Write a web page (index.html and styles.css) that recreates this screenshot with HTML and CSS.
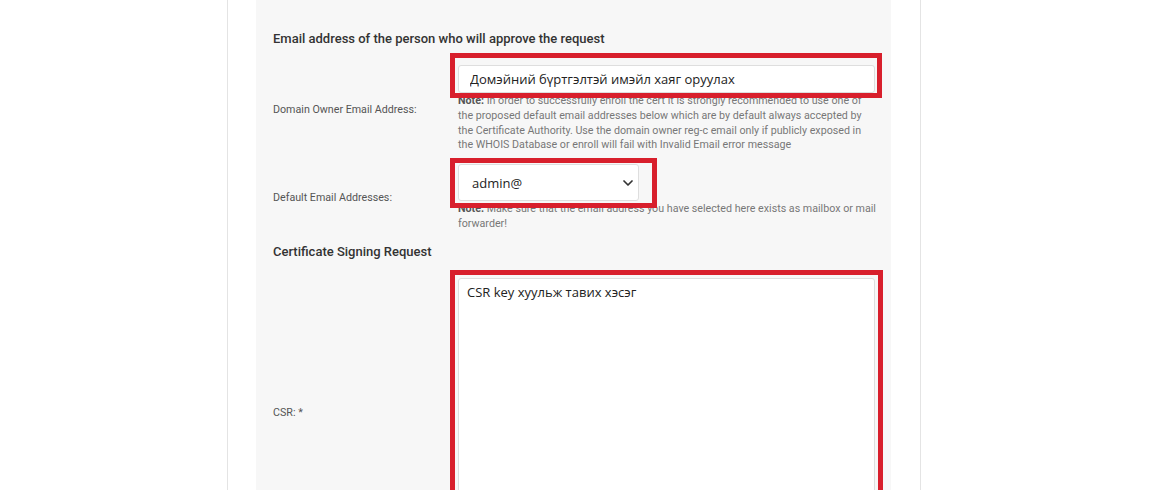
FILE: index.html
```html
<!DOCTYPE html>
<html lang="mn">
<head>
    <meta charset="UTF-8">
    <meta name="viewport" content="width=device-width, initial-scale=1.0">
    <title>SSL захиалга</title>
    <link rel="stylesheet" href="styles.css">
</head>
<body>
    <div class="page">
        <div class="card">
            <div class="panel">
                <h3 class="section-title">Email address of the person who will approve the request</h3>

                <div class="row">
                    <label class="row-label" for="ownerEmail">Domain Owner Email Address:</label>
                    <div class="row-field">
                        <div class="marked mark-input">
                            <input class="text-input" id="ownerEmail" type="text" value="Домэйний бүртгэлтэй имэйл хаяг оруулах">
                        </div>
                        <p class="note"><b>Note:</b> In order to successfully enroll the cert it is strongly recommended to use one of<br>
                            the proposed default email addresses below which are by default always accepted by<br>
                            the Certificate Authority. Use the domain owner reg-c email only if publicly exposed in<br>
                            the WHOIS Database or enroll will fail with Invalid Email error message</p>
                    </div>
                </div>

                <div class="row">
                    <label class="row-label" for="defaultEmail">Default Email Addresses:</label>
                    <div class="row-field">
                        <div class="marked mark-select">
                            <select class="select-input" id="defaultEmail">
                                <option>admin@</option>
                                <option>administrator@</option>
                                <option>hostmaster@</option>
                                <option>postmaster@</option>
                                <option>webmaster@</option>
                            </select>
                            <svg class="chevron" width="10" height="6" viewBox="0 0 10 6">
                                <path d="M1 1l4 4 4-4" fill="none" stroke="#333" stroke-width="1.7" stroke-linecap="round" stroke-linejoin="round"/>
                            </svg>
                        </div>
                        <p class="note"><b>Note:</b> Make sure that the email address you have selected here exists as mailbox or mail forwarder!</p>
                    </div>
                </div>

                <h3 class="section-title">Certificate Signing Request</h3>

                <div class="row">
                    <label class="row-label" for="csr">CSR: *</label>
                    <div class="row-field">
                        <div class="marked mark-area">
                            <textarea class="area-input" id="csr">CSR key хуульж тавих хэсэг</textarea>
                        </div>
                    </div>
                </div>
            </div>
        </div>
    </div>
</body>
</html>
```

FILE: styles.css
```css
* {
    margin: 0;
    padding: 0;
    box-sizing: border-box;
}

body {
    background: #fff;
    font-family: Roboto, "Liberation Sans", sans-serif;
    color: #333;
    overflow: hidden;
}

.page {
    padding-left: 227px;
}

.card {
    width: 694px;
    background: #fff;
    border-left: 1px solid #e4e4e4;
    border-right: 1px solid #e4e4e4;
    padding: 0 29px 0 28px;
}

.panel {
    background: #f7f7f7;
    padding: 30px 15px 0 17px;
}

.section-title {
    font-size: 13px;
    font-weight: 500;
    line-height: 18px;
    color: #333;
    margin-bottom: 17px;
}

.row {
    display: grid;
    grid-template-columns: 185px 417px;
    align-items: center;
    margin-bottom: 11px;
}

.row-label {
    font-size: 10.7px;
    color: #555;
}

.row-field {
    display: flex;
    flex-direction: column;
}

.marked {
    position: relative;
}

/* red annotation frames drawn over the fields */
.marked::after {
    content: '';
    position: absolute;
    border: 5px solid #d81f2c;
    pointer-events: none;
    z-index: 2;
}

.mark-input::after {
    top: -12px;
    left: -8px;
    right: -7px;
    bottom: -5px;
}

.mark-select {
    width: 181px;
}

.mark-select::after {
    top: -6px;
    left: -8px;
    right: -18px;
    bottom: -7px;
}

.mark-area::after {
    top: -8px;
    left: -8px;
    right: -8px;
    bottom: -8px;
}

.text-input,
.select-input,
.area-input {
    display: block;
    width: 100%;
    font-family: "Open Sans", "Liberation Sans", sans-serif;
    font-size: 13px;
    color: #222;
    background: #fff;
    border: 1px solid #dedede;
    border-radius: 3px;
    outline: none;
}

.text-input {
    height: 28px;
    padding: 0 11px;
}

.select-input {
    height: 37px;
    padding: 0 13px;
    appearance: none;
    -webkit-appearance: none;
}

.chevron {
    position: absolute;
    right: 6px;
    top: 16px;
    pointer-events: none;
}

.area-input {
    height: 270px;
    padding: 4px 8px;
    line-height: 18px;
    resize: none;
}

.note {
    font-size: 10.7px;
    line-height: 14.8px;
    color: #777;
    padding-top: 1px;
    margin-right: -6px;
}

.note b {
    color: #555;
    font-weight: 700;
}
```
